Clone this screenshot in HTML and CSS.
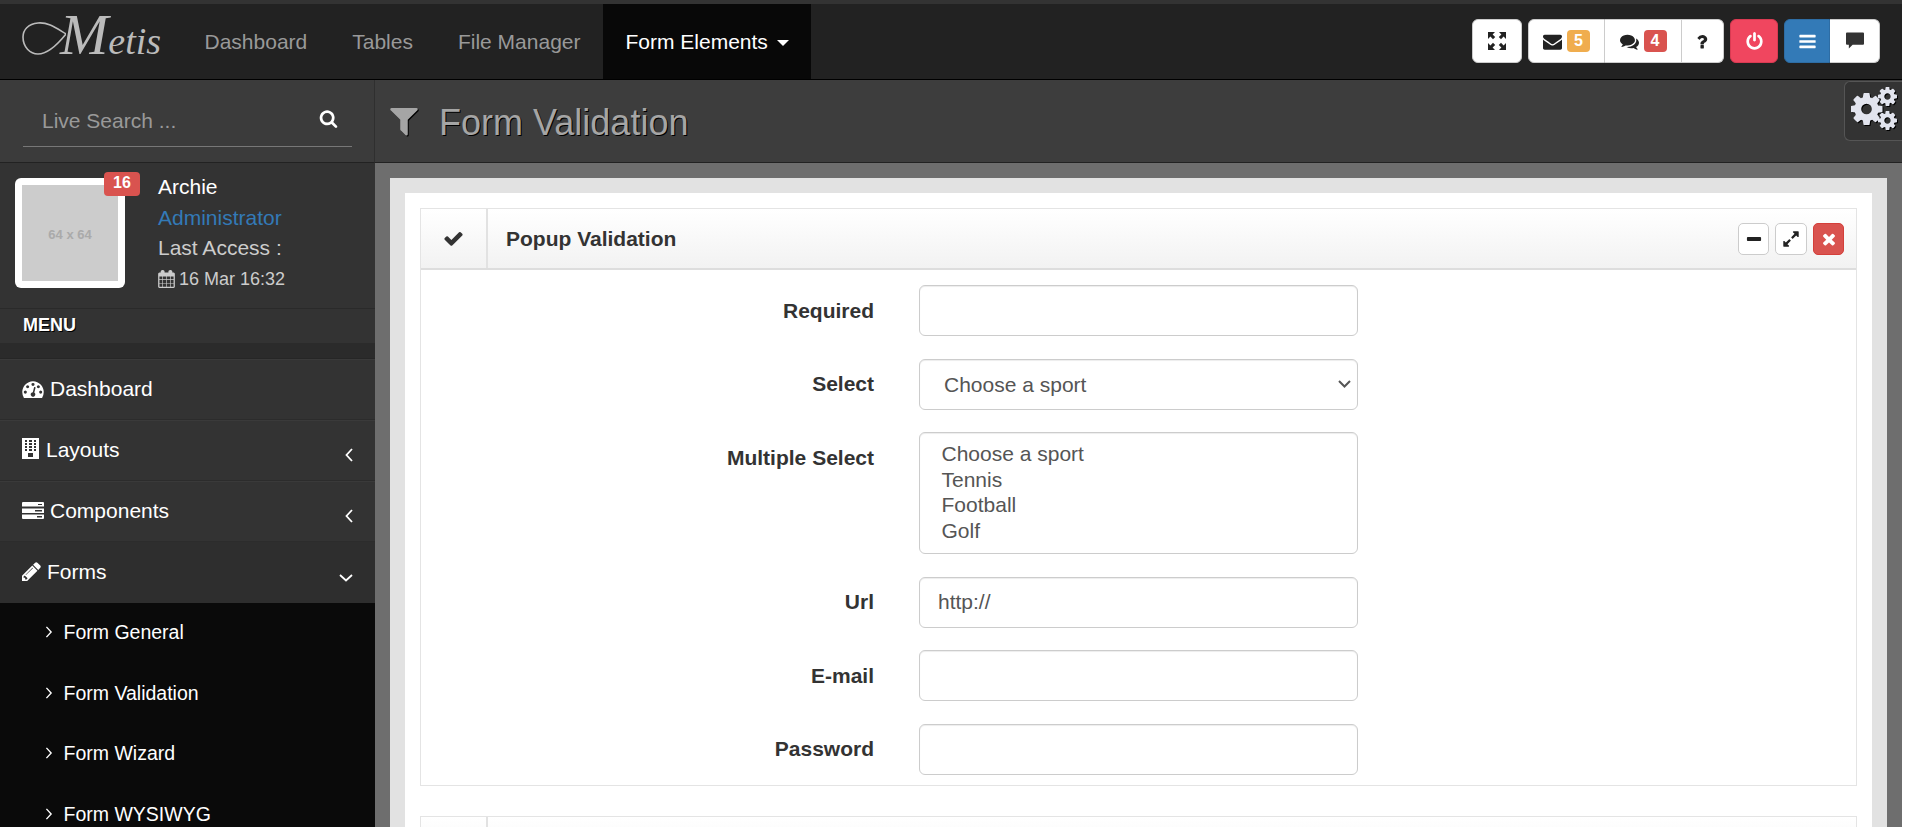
FILE: index.html
```html
<!DOCTYPE html>
<html lang="en">
<head>
  <meta charset="UTF-8">
  <meta name="viewport" content="width=device-width, initial-scale=1.0">
  <title>Form Validation</title>
  <link rel="stylesheet" href="styles.css">
</head>
<body>
  <div class="page">
    <header class="topnav">
      <a class="logo" href="#">
        <svg class="logo-swash" viewBox="0 0 44 40"><path d="M44 18C34 12 26 6 16 7 6 8 1 14 1 21c0 10 7 17 15 17 10 0 20-10 28-20" fill="none" stroke="#bbb" stroke-width="1.6"/></svg>
        <span class="logo-text"><span class="logo-cap">M</span>etis</span>
      </a>
      <nav class="links">
        <a href="#">Dashboard</a>
        <a href="#">Tables</a>
        <a href="#">File Manager</a>
        <a class="active" href="#">Form Elements <span class="caret"></span></a>
      </nav>
      <div class="toolbar">
        <button class="tool tool-full">
          <svg class="ic18" viewBox="0 0 18 18"><path d="M0 0h7L4.6 2.4 7.2 5 5 7.2 2.4 4.6 0 7zM18 0h-7l2.4 2.4L10.8 5 13 7.2l2.6-2.6L18 7zM0 18h7l-2.4-2.4L7.2 13 5 10.8l-2.6 2.6L0 11zM18 18h-7l2.4-2.4-2.6-2.6 2.200-2.200 2.600 2.600L18 11z"/></svg>
        </button>
        <div class="tool-group">
          <button class="tool tool-msg">
            <svg class="ic19" viewBox="0 0 1792 1792"><path d="M1792 710v794q0 66-47 113t-113 47h-1472q-66 0-113-47t-47-113v-794q44 49 101 87 362 246 497 345 57 42 92.5 65.5t94.5 48 110 24.5h2q51 0 110-24.5t94.5-48 92.5-65.5q170-123 498-345 57-39 100-87zm0-294q0 79-49 151t-122 123q-376 261-468 325-10 7-42.5 30.5t-54 38-52 32.5-57.5 27-50 9h-2q-23 0-50-9t-57.5-27-52-32.5-54-38-42.5-30.5q-91-64-262-182.5t-205-142.5q-62-42-117-115.5t-55-136.5q0-78 41.5-130t118.5-52h1472q65 0 112.5 47t47.5 113z"/></svg>
            <span class="label-count warn">5</span>
          </button>
          <button class="tool tool-msg">
            <svg class="ic19" viewBox="0 0 1792 1792"><path d="M1408 768q0 139-94 257t-256.5 186.5-353.5 68.5q-86 0-176-16-124 88-278 128-36 9-86 16h-3q-11 0-20.5-8t-11.5-21q-1-3-1-6.5t.5-6.5 2-6l2.5-5 3.5-5.5 4-5 4.5-5 4-4.5q5-6 23-25t26-29.5 22.5-29 25-38.5 20.5-44q-124-72-195-177t-71-224q0-139 94-257t256.5-186.5 353.5-68.5 353.5 68.5 256.5 186.5 94 257zm384 256q0 120-71 224.5t-195 176.5q10 24 20.5 44t25 38.5 22.5 29 26 29.5 23 25q1 1 4 4.5t4.5 5 4 5 3.5 5.5l2.5 5 2 6 .5 6.5-1 6.5q-3 14-13 22t-22 7q-50-7-86-16-154-40-278-128-90 16-176 16-271 0-472-132 58 4 88 4 161 0 309-45t264-129q125-92 192-212t67-254q0-77-23-152 129 71 204 178t75 230z"/></svg>
            <span class="label-count danger">4</span>
          </button>
          <button class="tool tool-help">
            <svg class="ic19" viewBox="0 0 1792 1792"><path d="M1024 1276v240q0 16-12 28t-28 12h-240q-16 0-28-12t-12-28v-240q0-16 12-28t28-12h240q16 0 28 12t12 28zm316-600q0 54-15.5 101t-35 76.5-55 59.5-57.5 43.5-61 35.5q-41 23-68.5 65t-27.5 67q0 17-12 32.5t-28 15.5h-240q-15 0-25.5-18.5t-10.5-37.5v-45q0-83 65-156.5t143-108.5q59-27 84-56t25-76q0-42-46.5-74t-107.5-32q-65 0-108 29-35 25-107 115-13 16-31 16-12 0-25-8l-164-125q-13-10-15.5-25t5.5-28q160-266 464-266 80 0 161 31t146 83 106 127.5 41 158.5z"/></svg>
          </button>
        </div>
        <button class="tool tool-power">
          <svg class="ic19" viewBox="0 0 1792 1792"><path d="M1664 896q0 156-61 298t-164 245-245 164-298 61-298-61-245-164-164-245-61-298q0-182 80.5-343t226.5-270q43-32 95.5-25t83.5 50q32 42 24.5 94.5t-49.5 84.5q-98 74-151.5 181t-53.5 228q0 104 40.5 198.5t109.5 163.5 163.5 109.5 198.5 40.5 198.5-40.5 163.5-109.5 109.5-163.5 40.5-198.5q0-121-53.5-228t-151.5-181q-42-32-49.5-84.5t24.5-94.5q31-43 84-50t95 25q146 109 226.5 270t80.5 343zm-640-768v640q0 52-38 90t-90 38-90-38-38-90v-640q0-52 38-90t90-38 90 38 38 90z"/></svg>
        </button>
        <div class="tool-group">
          <button class="tool tool-menu">
            <svg class="ic19" viewBox="0 0 1792 1792"><path d="M1664 1344v128q0 26-19 45t-45 19h-1408q-26 0-45-19t-19-45v-128q0-26 19-45t45-19h1408q26 0 45 19t19 45zm0-512v128q0 26-19 45t-45 19h-1408q-26 0-45-19t-19-45v-128q0-26 19-45t45-19h1408q26 0 45 19t19 45zm0-512v128q0 26-19 45t-45 19h-1408q-26 0-45-19t-19-45v-128q0-26 19-45t45-19h1408q26 0 45 19t19 45z"/></svg>
          </button>
          <button class="tool tool-chat">
            <svg class="ic18" viewBox="0 0 19 18"><path d="M1 0h17a1 1 0 0 1 1 1v11a1 1 0 0 1-1 1H7l-4 4v-4H1a1 1 0 0 1-1-1V1a1 1 0 0 1 1-1z"/></svg>
          </button>
        </div>
      </div>
    </header>

    <a class="gear-tab" href="#">
      <svg class="gears" viewBox="0 0 46 43">
        <defs>
          <path id="cog" d="M1152 896q0-106-75-181t-181-75-181 75-75 181 75 181 181 75 181-75 75-181zm512-109v222q0 12-8 23t-20 13l-185 28q-19 54-39 91 35 50 107 138 10 12 10 25t-9 23q-27 37-99 108t-94 71q-12 0-26-9l-138-108q-44 23-91 38-16 136-29 186-7 28-36 28h-222q-14 0-24.5-8.5t-11.5-21.5l-28-184q-49-16-90-37l-141 107q-10 9-25 9-14 0-25-11-126-114-165-168-7-10-7-23 0-12 8-23 15-21 51-66.5t54-70.5q-27-50-41-99l-183-27q-13-2-21-12.5t-8-23.5v-222q0-12 8-23t19-13l186-28q14-46 39-92-40-57-107-138-10-12-10-24 0-10 9-23 26-36 98.5-107.5t94.5-71.5q13 0 26 10l138 107q44-23 91-38 16-136 29-186 7-28 36-28h222q14 0 24.5 8.5t11.5 21.5l28 184q49 16 90 37l142-107q9-9 24-9 13 0 25 10 129 119 165 170 7 8 7 22 0 12-8 23-15 21-51 66.5t-54 70.5q26 50 41 98l183 28q13 2 21 12.5t8 23.5z"/>
        </defs>
        <use href="#cog" transform="translate(-3.1 3.4) scale(.0208)"/>
        <use href="#cog" transform="translate(25.4 -1.6) scale(.01237)"/>
        <use href="#cog" transform="translate(25.4 22.4) scale(.01237)"/>
      </svg>
    </a>

    <div class="columns">
      <aside class="sidebar">
        <div class="search">
          <form class="search-box">
            <input type="text" placeholder="Live Search ...">
            <svg class="search-ic" viewBox="0 0 1792 1792"><path d="M1216 832q0-185-131.5-316.5t-316.5-131.5-316.5 131.5-131.5 316.5 131.5 316.5 316.5 131.5 316.5-131.5 131.5-316.5zm512 832q0 52-38 90t-90 38q-54 0-90-38l-343-342q-179 124-399 124-143 0-273.5-55.5t-225-150-150-225-55.5-273.5 55.5-273.5 150-225 225-150 273.5-55.5 273.5 55.5 225 150 150 225 55.5 273.5q0 220-124 399l343 343q37 37 37 90z"/></svg>
          </form>
        </div>

        <div class="user">
          <div class="avatar">
            <div class="avatar-img">64 x 64</div>
            <span class="avatar-badge">16</span>
          </div>
          <ul class="user-info">
            <li class="user-name">Archie</li>
            <li class="user-role">Administrator</li>
            <li>Last Access :</li>
            <li class="user-date">
              <svg class="cal-ic" viewBox="0 0 1664 1792"><path d="M128 1664h288v-288h-288v288zm352 0h320v-288h-320v288zm-352-352h288v-320h-288v320zm352 0h320v-320h-320v320zm-352-384h288v-288h-288v288zm736 736h320v-288h-320v288zm-384-736h320v-288h-320v288zm768 736h288v-288h-288v288zm-384-352h320v-320h-320v320zm384 0h288v-320h-288v320zm-384-384h320v-288h-320v288zm384 0h288v-288h-288v288zM1536 256h-128v-96q0-66-47-113t-113-47h-64q-66 0-113 47t-47 113v96h-384v-96q0-66-47-113t-113-47h-64q-66 0-113 47t-47 113v96h-128q-52 0-90 38t-38 90v1280q0 52 38 90t90 38h1408q52 0 90-38t38-90v-1280q0-52-38-90t-90-38z" fill-rule="evenodd"/></svg>
              16 Mar 16:32
            </li>
          </ul>
        </div>

        <div class="menu-title">MENU</div>
        <div class="menu-gap"></div>

        <ul class="menu">
          <li class="menu-item">
            <svg class="menu-ic ic-dash" viewBox="0 0 1792 1500"><path transform="translate(0 -142)" d="M384 1152q0-53-37.5-90.5t-90.5-37.5-90.5 37.5-37.5 90.5 37.5 90.5 90.5 37.5 90.5-37.5 37.5-90.5zm192-448q0-53-37.5-90.5t-90.5-37.5-90.5 37.5-37.5 90.5 37.5 90.5 90.5 37.5 90.5-37.5 37.5-90.5zm428 481l101-382q6-26-7.5-48.5t-38.5-29.5-48 6.5-30 39.5l-101 382q-60 5-107 43.5t-63 98.5q-20 77 20 146t117 89 146-20 89-117q16-60-6-117t-72-91zm660-33q0-53-37.5-90.5t-90.5-37.5-90.5 37.5-37.5 90.5 37.5 90.5 90.5 37.5 90.5-37.5 37.5-90.5zm-640-640q0-53-37.5-90.5t-90.5-37.5-90.5 37.5-37.5 90.5 37.5 90.5 90.5 37.5 90.5-37.5 37.5-90.5zm448 192q0-53-37.5-90.5t-90.5-37.5-90.5 37.5-37.5 90.5 37.5 90.5 90.5 37.5 90.5-37.5 37.5-90.5zm320 448q0 261-141 483-19 29-54 29h-1402q-35 0-54-29-141-221-141-483 0-182 71-348t191-286 286-191 348-71 348 71 286 191 191 286 71 348z"/></svg>
            <span>Dashboard</span>
          </li>
          <li class="menu-item">
            <svg class="menu-ic ic-build" viewBox="0 0 17 21"><path fill-rule="evenodd" d="M0 0h17v21H0zM3 2v2h2V2zm4 0v2h3V2zm5 0v2h2V2zM3 5v2h2V5zm4 0v2h3V5zm5 0v2h2V5zM3 8v2h2V8zm4 0v2h3V8zm5 0v2h2V8zM3 11v2h2v-2zm4 0v2h3v-2zm5 0v2h2v-2zM6 15v4h5v-4z"/></svg>
            <span>Layouts</span>
            <svg class="chev chev-left" viewBox="0 0 8 14"><path d="M7 1 1.500 7 7 13"/></svg>
          </li>
          <li class="menu-item">
            <svg class="menu-ic ic-comp" viewBox="0 0 22 17"><path fill-rule="evenodd" d="M1 0h20a1 1 0 0 1 1 1v3.500H0V1a1 1 0 0 1 1-1zm15 2v1h4V2zM0 6.500h22V11H0zM13 8v1.500h7V8zM0 12.500h22V16a1 1 0 0 1-1 1H1a1 1 0 0 1-1-1zM15 14v1.500h5V14z"/></svg>
            <span>Components</span>
            <svg class="chev chev-left" viewBox="0 0 8 14"><path d="M7 1 1.500 7 7 13"/></svg>
          </li>
          <li class="menu-item menu-open">
            <svg class="menu-ic ic-pen" viewBox="0 0 1536 1536"><path transform="translate(-128 -128)" d="M491 1536l91-91-235-235-91 91v107h128v128h107zm523-928q0-22-22-22-10 0-17 7l-542 542q-7 7-7 17 0 22 22 22 10 0 17-7l542-542q7-7 7-17zm-54-192l416 416-832 832h-416v-416zm683 96q0 53-37 90l-166 166-416-416 166-165q36-38 90-38 53 0 91 38l235 234q37 39 37 91z"/></svg>
            <span>Forms</span>
            <svg class="chev chev-down" viewBox="0 0 14 8"><path d="M1 1l6 5.500L13 1"/></svg>
          </li>
        </ul>

        <ul class="submenu">
          <li><svg class="sub-chev" viewBox="0 0 8 14"><path d="M1 1l5.500 6L1 13"/></svg>Form General</li>
          <li><svg class="sub-chev" viewBox="0 0 8 14"><path d="M1 1l5.500 6L1 13"/></svg>Form Validation</li>
          <li><svg class="sub-chev" viewBox="0 0 8 14"><path d="M1 1l5.500 6L1 13"/></svg>Form Wizard</li>
          <li><svg class="sub-chev" viewBox="0 0 8 14"><path d="M1 1l5.500 6L1 13"/></svg>Form WYSIWYG</li>
        </ul>
      </aside>

      <main class="main">
        <div class="head">
          <svg class="head-ic" viewBox="0 0 1536 1536"><path transform="translate(-128 -256)" d="M1595 295q17 41-14 70l-493 493v742q0 42-39 59-13 5-25 5-27 0-45-19l-256-256q-19-19-19-45v-486l-493-493q-31-29-14-70 17-39 59-39h1280q42 0 59 39z"/></svg>
          <h1>Form Validation</h1>
        </div>
        <div class="outer">
          <div class="inner">
            <div class="content">
              <section class="panel">
                <header class="panel-head">
                  <div class="panel-icon">
                    <svg class="check-ic" viewBox="0 0 1792 1792"><path d="M1671 566q0 40-28 68l-724 724-136 136q-28 28-68 28t-68-28l-136-136-362-362q-28-28-28-68t28-68l136-136q28-28 68-28t68 28l294 295 656-657q28-28 68-28t68 28l136 136q28 28 28 68z"/></svg>
                  </div>
                  <h2>Popup Validation</h2>
                  <div class="panel-tools">
                    <button class="mini">
                      <svg viewBox="0 0 1792 1792"><path d="M1600 736v192q0 40-28 68t-68 28h-1216q-40 0-68-28t-28-68v-192q0-40 28-68t68-28h1216q40 0 68 28t28 68z" transform="translate(0 64)"/></svg>
                    </button>
                    <button class="mini mini-wide">
                      <svg viewBox="0 0 1792 1792"><path d="M883 1056q0 13-10 23l-332 332 144 144q19 19 19 45t-19 45-45 19h-448q-26 0-45-19t-19-45v-448q0-26 19-45t45-19 45 19l144 144 332-332q10-10 23-10t23 10l114 114q10 10 10 23zm781-864v448q0 26-19 45t-45 19-45-19l-144-144-332 332q-10 10-23 10t-23-10l-114-114q-10-10-10-23t10-23l332-332-144-144q-19-19-19-45t19-45 45-19h448q26 0 45 19t19 45z"/></svg>
                    </button>
                    <button class="mini mini-close">
                      <svg viewBox="0 0 1792 1792"><path d="M1490 1322q0 40-28 68l-136 136q-28 28-68 28t-68-28l-294-294-294 294q-28 28-68 28t-68-28l-136-136q-28-28-28-68t28-68l294-294-294-294q-28-28-28-68t28-68l136-136q28-28 68-28t68 28l294 294 294-294q28-28 68-28t68 28l136 136q28 28 28 68t-28 68l-294 294 294 294q28 28 28 68z"/></svg>
                    </button>
                  </div>
                </header>
                <form class="panel-body">
                  <label>Required</label>
                  <input class="field" type="text">
                  <label>Select</label>
                  <select class="field field-select">
                    <option>Choose a sport</option>
                    <option>Tennis</option>
                    <option>Football</option>
                    <option>Golf</option>
                  </select>
                  <label>Multiple Select</label>
                  <select class="field field-multi" multiple size="4">
                    <option>Choose a sport</option>
                    <option>Tennis</option>
                    <option>Football</option>
                    <option>Golf</option>
                  </select>
                  <label>Url</label>
                  <input class="field" type="text" value="http://">
                  <label>E-mail</label>
                  <input class="field" type="text">
                  <label>Password</label>
                  <input class="field" type="password">
                </form>
              </section>
              <section class="panel">
                <header class="panel-head">
                  <div class="panel-icon"></div>
                </header>
              </section>
            </div>
          </div>
        </div>
      </main>
    </div>
  </div>
</body>
</html>
```

FILE: styles.css
```css
* {
  box-sizing: border-box;
}
html, body {
  margin: 0;
  padding: 0;
  height: 827px;
  overflow: hidden;
  background: #fff;
}
body {
  font-family: "Liberation Sans", Arial, sans-serif;
  font-size: 21px;
  line-height: 30px;
  color: #333;
}
ul {
  list-style: none;
  margin: 0;
  padding: 0;
}
a {
  text-decoration: none;
}
svg {
  fill: currentColor;
}
button {
  font: inherit;
  border: none;
  padding: 0;
}
.page {
  position: relative;
  width: 1902px;
  height: 827px;
  overflow: hidden;
  background: #333;
  border-top: 4px solid #333;
}

/* top bar */
.topnav {
  display: flex;
  height: 76px;
  background: #222;
  border-bottom: 1px solid #000;
}
.logo {
  display: flex;
  align-items: flex-start;
  width: 182px;
  padding: 12px 0 0 22px;
  color: #bbb;
}
.logo-swash {
  flex: none;
  width: 44px;
  height: 40px;
  margin-right: -6px;
}
.logo-text {
  margin-top: -5px;
  font-family: "Liberation Serif", serif;
  font-style: italic;
  font-size: 38px;
  line-height: 48px;
}
.logo-cap {
  font-size: 58px;
}
.links {
  display: flex;
}
.links a {
  display: block;
  padding: 0 22.5px;
  line-height: 75px;
  color: #999;
}
.links a.active {
  background: #080808;
  color: #fff;
}
.caret {
  display: inline-block;
  margin-left: 3px;
  vertical-align: middle;
  border-top: 6px solid #fff;
  border-left: 6px solid transparent;
  border-right: 6px solid transparent;
}
.toolbar {
  display: flex;
  gap: 6px;
  margin-left: auto;
  padding: 15px 22px 0 0;
}
.tool-group {
  display: flex;
  height: 44px;
}
.tool {
  display: flex;
  align-items: center;
  justify-content: center;
  height: 44px;
  background: #fff;
  color: #222;
  border: 1px solid #ccc;
}
.tool-group .tool + .tool {
  border-left: none;
}
.tool-group .tool:first-child {
  border-radius: 6px 0 0 6px;
}
.tool-group .tool:last-child {
  border-radius: 0 6px 6px 0;
}
.tool-full {
  width: 50px;
  border-radius: 6px;
}
.tool-msg {
  width: 77px;
  gap: 5px;
}
.tool-help {
  width: 42px;
}
.tool-power {
  width: 48px;
  background: #f0465f;
  border-color: #d93a52;
  border-radius: 6px;
  color: #fff;
}
.tool-menu {
  width: 46px;
  background: #337ab7;
  border-color: #2e6da4;
  color: #fff;
}
.tool-chat {
  width: 50px;
  color: #333;
}
.ic18 {
  width: 18px;
  height: 18px;
}
.ic19 {
  width: 19px;
  height: 19px;
}
.label-count {
  display: block;
  min-width: 23px;
  padding: 0 5px;
  height: 22px;
  border-radius: 4px;
  font-size: 16px;
  line-height: 21px;
  font-weight: bold;
  color: #fff;
  text-align: center;
}
.warn {
  background: #f0ad4e;
}
.danger {
  background: #d9534f;
}
.gear-tab {
  position: absolute;
  top: 77px;
  right: 0;
  display: flex;
  align-items: center;
  justify-content: center;
  width: 58px;
  height: 60px;
  background: #333;
  border: 1px solid #555;
  border-right: none;
  border-radius: 6px 0 0 6px;
  color: #e2e4ee;
}
.gears {
  width: 46px;
  height: 43px;
  margin-bottom: 6px;
  filter: drop-shadow(1px 1px 0 #000);
}

/* layout */
.columns {
  display: flex;
  height: 747px;
}
.sidebar {
  flex: none;
  width: 375px;
  background: #333;
  overflow: hidden;
}
.main {
  flex: 1;
  min-width: 0;
  overflow: hidden;
}

/* sidebar */
.search {
  height: 83px;
  padding: 16px 22px 0 23px;
  background: #3b3b3b;
  border-right: 1px solid #2f2f2f;
  border-bottom: 1px solid #222;
}
.search-box {
  display: flex;
  align-items: center;
  height: 51px;
  border-bottom: 1px solid #777;
}
.search-box input {
  flex: 1;
  min-width: 0;
  height: 50px;
  padding: 0 19px;
  background: transparent;
  border: none;
  outline: none;
  font: inherit;
  color: #ccc;
}
.search-box input::placeholder {
  color: #999;
}
.search-ic {
  flex: none;
  width: 19px;
  height: 19px;
  margin: -5px 14px 0 0;
  color: #fff;
}
.user {
  display: flex;
  height: 146px;
  padding: 9px 0 0 15px;
  border-bottom: 1px solid #2a2a2a;
}
.avatar {
  position: relative;
  flex: none;
  width: 110px;
  height: 110px;
  margin: 6px 33px 0 0;
  padding: 7px;
  background: #fff;
  border-radius: 6px;
}
.avatar-img {
  height: 96px;
  background: #ccc;
  color: #aaa;
  font-size: 13px;
  font-weight: bold;
  line-height: 100px;
  text-align: center;
}
.avatar-badge {
  position: absolute;
  top: -6px;
  right: -15px;
  width: 36px;
  height: 24px;
  background: #d9534f;
  border-radius: 4px;
  color: #fff;
  font-size: 16px;
  font-weight: bold;
  line-height: 21px;
  text-align: center;
}
.user-info li {
  height: 30.5px;
  color: #ccc;
}
.user-info .user-name {
  color: #fff;
}
.user-info .user-role {
  color: #337ab7;
}
.user-info .user-date {
  display: flex;
  align-items: center;
  gap: 4px;
  font-size: 18px;
}
.cal-ic {
  width: 17px;
  height: 18px;
}
.menu-title {
  height: 34px;
  padding-left: 23px;
  background: #333;
  color: #fff;
  font-size: 18px;
  font-weight: bold;
  line-height: 32px;
  text-shadow: 1px 1px 0 #000;
}
.menu-gap {
  height: 16px;
  background: #2b2b2b;
  border-bottom: 1px solid #262626;
}
.menu-item {
  display: flex;
  align-items: center;
  height: 61px;
  padding: 0 22px 2px;
  background: #333;
  border-top: 1px solid #3a3a3a;
  border-bottom: 1px solid #2c2c2c;
  color: #fff;
}
.menu-item span {
  flex: 1;
}
.menu-open {
  background: #2e2e2e;
  border-color: #2e2e2e;
}
.menu-ic {
  flex: none;
  margin-right: 6px;
}
.ic-dash {
  width: 22px;
  height: 18px;
}
.ic-build {
  width: 17px;
  height: 21px;
  margin-top: -3px;
  margin-right: 7px;
}
.ic-comp {
  width: 22px;
  height: 17px;
}
.ic-pen {
  width: 19px;
  height: 19px;
}
.chev {
  fill: none;
  stroke: #fff;
  stroke-width: 1.8;
}
.chev-left {
  width: 8px;
  height: 14px;
  margin-top: 10px;
}
.chev-down {
  width: 14px;
  height: 8px;
  margin-top: 12px;
}
.submenu {
  background: #0a0a0a;
}
.submenu li {
  display: flex;
  align-items: center;
  height: 60.5px;
  padding: 0 0 2px 45px;
  color: #fff;
  font-size: 19.5px;
}
.sub-chev {
  width: 8px;
  height: 12px;
  margin-right: 10.5px;
  fill: none;
  stroke: #fff;
  stroke-width: 1.6;
}

/* page head */
.head {
  display: flex;
  align-items: center;
  height: 83px;
  padding-left: 14px;
  background: #3d3d3d;
  border-bottom: 1px solid #222;
}
.head-ic {
  width: 30px;
  height: 30px;
  margin: 4px 20px 0 0;
  color: #a5a5a5;
  filter: drop-shadow(1px 1px 0 #000);
}
.head h1 {
  margin: 4px 0 0;
  font-size: 36px;
  font-weight: normal;
  line-height: 40px;
  color: #a5a5a5;
  text-shadow: 1px 1px 0 #000;
}
.outer {
  padding: 15px;
  background: #6e6e6e;
}
.inner {
  padding: 15px;
  background: #e2e2e2;
}
.content {
  padding: 15px;
  background: #fff;
}

/* panels */
.panel {
  border: 1px solid #e4e4e4;
  margin-bottom: 30px;
}
.panel-head {
  display: flex;
  align-items: center;
  height: 61px;
  background: linear-gradient(#fff, #f2f2f2);
  border-bottom: 2px solid #ddd;
}
.panel-icon {
  display: flex;
  align-items: center;
  justify-content: center;
  width: 67px;
  height: 100%;
  border-right: 2px solid #e2e2e2;
}
.check-ic {
  width: 21px;
  height: 21px;
  color: #333;
}
.panel-head h2 {
  margin: 0 0 0 18px;
  font-size: 21px;
  font-weight: bold;
  line-height: 30px;
}
.panel-tools {
  display: flex;
  gap: 6px;
  margin-left: auto;
  padding-right: 12px;
}
.mini {
  display: flex;
  align-items: center;
  justify-content: center;
  width: 31px;
  height: 32px;
  background: #fff;
  border: 1px solid #ccc;
  border-radius: 5px;
  color: #222;
}
.mini svg {
  width: 18px;
  height: 18px;
}
.mini-wide {
  width: 32px;
}
.mini-close {
  background: #d9534f;
  border-color: #d43f3a;
  color: #fff;
}
.panel-body {
  display: grid;
  grid-template-columns: 453px 439px;
  column-gap: 45px;
  row-gap: 22.5px;
  padding: 15px 0 10px;
}
.panel-body label {
  padding-top: 10.5px;
  font-weight: bold;
  text-align: right;
}
.field {
  display: block;
  width: 100%;
  height: 51px;
  padding: 9px 18px;
  background: #fff;
  border: 1px solid #ccc;
  border-radius: 6px;
  box-shadow: inset 0 1px 1px rgba(0, 0, 0, 0.075);
  outline: none;
  font: inherit;
  color: #555;
}
.field-select {
  appearance: none;
  padding: 10px 18px 8px 24px;
  background: #fff url("data:image/svg+xml,%3Csvg xmlns='http://www.w3.org/2000/svg' width='13' height='8'%3E%3Cpath d='M1 1l5.500 5.500L12 1' fill='none' stroke='%23555' stroke-width='2'/%3E%3C/svg%3E") no-repeat right 6px center;
}
.field-multi {
  height: 122px;
  padding-left: 19.5px;
  overflow: hidden;
}
.field-multi option {
  padding-bottom: 1.5px;
}
```
